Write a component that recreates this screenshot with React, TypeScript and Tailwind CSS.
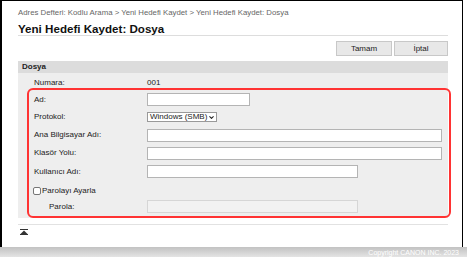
import { ChevronDown } from "lucide-react";

const rows = [
  { label: "Ad:", kind: "input", width: "w-[103px]" },
  { label: "Protokol:", kind: "select" },
  { label: "Ana Bilgisayar Adı:", kind: "input", width: "w-[295px]" },
  { label: "Klasör Yolu:", kind: "input", width: "w-[295px]" },
  { label: "Kullanıcı Adı:", kind: "input", width: "w-[211px]" },
];

function TopIcon() {
  return (
    <svg width="8" height="6" viewBox="0 0 8 6" className="block">
      <rect x="0" y="0" width="8" height="1" fill="#333" />
      <polygon points="4,1.5 7.5,5 0.5,5" fill="#333" />
      <rect x="0" y="5" width="8" height="1" fill="#333" />
    </svg>
  );
}

export default function App() {
  return (
    <div className="relative w-[467px] h-[257px] overflow-hidden bg-white font-['Liberation_Sans',Arial,sans-serif] text-[#222]">
      <div className="w-[463px] h-[247px] border-l-2 border-t border-r border-black bg-white flex flex-col pl-[16px] pr-[14px]">
        {/* breadcrumb */}
        <div className="mt-[7px] h-[10px] leading-[10px] text-[7.8px] text-[#666] whitespace-nowrap">
          Adres Defteri: Kodlu Arama &gt; Yeni Hedefi Kaydet &gt; Yeni Hedefi Kaydet: Dosya
        </div>
        <h1 className="mt-[4px] h-[14px] leading-[14px] text-[11.6px] font-bold text-[#111] border-b border-[#dddddd] whitespace-nowrap">
          Yeni Hedefi Kaydet: Dosya
        </h1>

        <div className="mt-[5px] flex justify-end gap-[2px]">
          <button className="w-[56px] h-[15px] border border-[#c8c8c8] bg-[#e8e8e8] text-[8px] leading-[13px] text-[#222]">
            Tamam
          </button>
          <button className="w-[54px] h-[15px] border border-[#c8c8c8] bg-[#e8e8e8] text-[8px] leading-[13px] text-[#222]">
            İptal
          </button>
        </div>

        <div className="mt-[5px] h-[12px] bg-[#dcdcdc] pl-[4px] text-[8px] leading-[12px] font-bold text-[#222]">
          Dosya
        </div>

        <div className="bg-[#eeeeee] pt-[1px] pb-[5px] text-[8px]">
          <div className="grid grid-cols-[113px_1fr] items-center h-[17px] pl-[16px]">
            <span>Numara:</span>
            <span>001</span>
          </div>

          {rows.map((row, i) => (
            <div
              key={row.label}
              className={`grid grid-cols-[113px_1fr] items-center pl-[16px] ${
                i === 0 ? "h-[17px]" : i === 4 ? "h-[19px]" : "h-[18px]"
              }`}
            >
              <span>{row.label}</span>
              {row.kind === "select" ? (
                <div className="w-[70px] h-[10px] border border-[#999] bg-white flex items-center justify-between pl-[2px] pr-[1px] text-[8px] leading-[8px]">
                  <span>Windows (SMB)</span>
                  <ChevronDown size={7} strokeWidth={3.5} />
                </div>
              ) : (
                <input
                  readOnly
                  className={`${row.width} h-[13px] border border-[#b4b4b4] bg-white outline-none`}
                />
              )}
            </div>
          ))}

          <div className="flex items-center h-[19px] pl-[15px] gap-[1px]">
            <div className="w-[8px] h-[8px] border border-[#767676] rounded-[2px] bg-white" />
            <span>Parolayı Ayarla</span>
          </div>

          <div className="grid grid-cols-[113px_1fr] items-center h-[13px] pl-[16px]">
            <span className="pl-[15px]">Parola:</span>
            <input
              readOnly
              disabled
              className="w-[211px] h-[13px] border border-[#d6d6d6] bg-[#f2f2f2] outline-none"
            />
          </div>
        </div>

        <div className="mt-[6px] border-t border-[#e2e2e2]" />
        <div className="mt-[4px] pl-[2px]">
          <TopIcon />
        </div>
      </div>

      {/* bottom shadow strip */}
      <div className="h-[10px] bg-gradient-to-b from-[#c2c2c2] to-[#e4e4e4] flex justify-end pr-[8px]">
        <span className="text-[7px] leading-[12px] text-white whitespace-nowrap">
          Copyright CANON INC. 2023
        </span>
      </div>

      {/* annotation highlight */}
      <div className="absolute left-[27px] top-[88px] w-[424px] h-[130px] border-2 border-[#ff3333] rounded-[6px] pointer-events-none" />
    </div>
  );
}
